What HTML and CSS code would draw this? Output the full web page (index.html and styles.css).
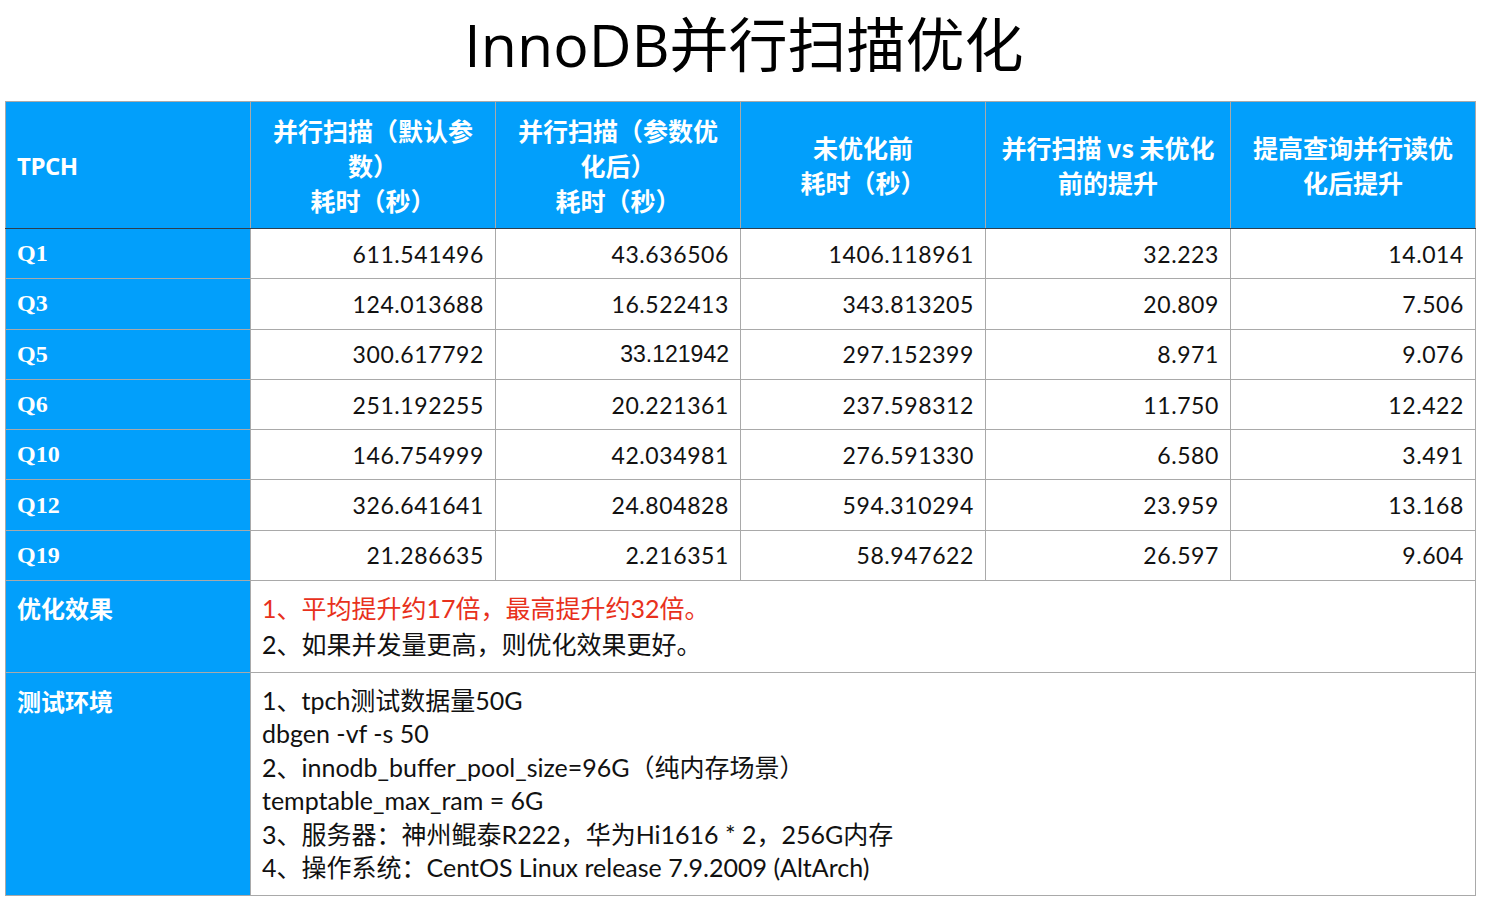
FILE: index.html
```html
<!DOCTYPE html>
<html lang="zh-CN">
<head>
<meta charset="utf-8">
<title>InnoDB并行扫描优化</title>
<link rel="stylesheet" href="styles.css">
</head>
<body>
<h1 class="title">InnoDB并行扫描优化</h1>
<table class="perf">
  <colgroup>
    <col class="c"><col class="c"><col class="c"><col class="c"><col class="c"><col class="c">
  </colgroup>
  <thead>
    <tr class="head">
      <th class="lbl">TPCH</th>
      <th>并行扫描（默认参数）<br>耗时（秒）</th>
      <th>并行扫描（参数优化后）<br>耗时（秒）</th>
      <th>未优化前<br>耗时（秒）</th>
      <th class="wide">并行扫描 vs 未优化前的提升</th>
      <th>提高查询并行读优化后提升</th>
    </tr>
  </thead>
  <tbody>
    <tr><td class="lbl q">Q1</td><td>611.541496</td><td>43.636506</td><td>1406.118961</td><td>32.223</td><td>14.014</td></tr>
    <tr><td class="lbl q">Q3</td><td>124.013688</td><td>16.522413</td><td>343.813205</td><td>20.809</td><td>7.506</td></tr>
    <tr><td class="lbl q">Q5</td><td>300.617792</td><td class="alt">33.121942</td><td>297.152399</td><td>8.971</td><td>9.076</td></tr>
    <tr><td class="lbl q">Q6</td><td>251.192255</td><td>20.221361</td><td>237.598312</td><td>11.750</td><td>12.422</td></tr>
    <tr><td class="lbl q">Q10</td><td>146.754999</td><td>42.034981</td><td>276.591330</td><td>6.580</td><td>3.491</td></tr>
    <tr><td class="lbl q">Q12</td><td>326.641641</td><td>24.804828</td><td>594.310294</td><td>23.959</td><td>13.168</td></tr>
    <tr><td class="lbl q">Q19</td><td>21.286635</td><td>2.216351</td><td>58.947622</td><td>26.597</td><td>9.604</td></tr>
    <tr class="effect">
      <td class="lbl top">优化效果</td>
      <td class="notes" colspan="5">
        <p class="red">1、平均提升约17倍，最高提升约32倍。</p>
        <p>2、如果并发量更高，则优化效果更好。</p>
      </td>
    </tr>
    <tr class="env">
      <td class="lbl top">测试环境</td>
      <td class="notes" colspan="5">
        <p>1、tpch测试数据量50G</p>
        <p>dbgen -vf -s 50</p>
        <p>2、innodb_buffer_pool_size=96G（纯内存场景）</p>
        <p>temptable_max_ram = 6G</p>
        <p>3、服务器：神州鲲泰R222，华为Hi1616 * 2，256G内存</p>
        <p>4、操作系统：CentOS Linux release 7.9.2009 (AltArch)</p>
      </td>
    </tr>
  </tbody>
</table>
</body>
</html>
```
FILE: styles.css
```css
html, body {
  margin: 0;
  padding: 0;
  background: #ffffff;
}
body {
  font-family: "Lato", "Noto Sans CJK SC", sans-serif;
  color: #111;
}
.title {
  margin: 0;
  height: 101px;
  box-sizing: border-box;
  padding-top: 6px;
  text-align: center;
  font-family: "Open Sans", "Noto Sans CJK SC", sans-serif;
  font-weight: 400;
  font-size: 59px;
  line-height: 76px;
  color: #000;
}
.perf {
  margin-left: 5px;
  width: 1471px;
  table-layout: fixed;
  border-collapse: collapse;
  font-size: 23px;
}
.perf col.c { width: 245px; }
.perf th,
.perf td {
  border: 1px solid #a9a9a9;
  padding: 0 11px;
  box-sizing: border-box;
}
.perf .head th {
  height: 127px;
  background: #029ffb;
  color: #fff;
  font-family: "Noto Sans CJK SC", sans-serif;
  font-weight: 700;
  font-size: 25px;
  line-height: 35px;
  text-align: center;
  vertical-align: middle;
  padding: 0 16px;
  border-bottom: 1px solid #2d3f4f;
}
.perf .head th.wide {
  padding: 0 12px;
}
.perf .head th.lbl {
  text-align: left;
  padding-left: 11px;
  font-family: "Open Sans", "Noto Sans CJK SC", sans-serif;
  font-weight: 700;
  font-size: 24px;
  letter-spacing: -0.5px;
}
.perf tbody td {
  height: 50.3px;
  text-align: right;
  vertical-align: middle;
  letter-spacing: 0.6px;
}
.perf tbody td.lbl {
  background: #029ffb;
  color: #fff;
  text-align: left;
  font-weight: 700;
  letter-spacing: 0;
}
.perf tbody td.q {
  font-family: "Liberation Serif", serif;
  font-size: 24px;
  padding-left: 11px;
}
.perf tbody td.top {
  vertical-align: top;
  font-family: "Noto Sans CJK SC", sans-serif;
  font-size: 24px;
  padding-top: 9px;
  line-height: 36px;
}
.perf td.alt {
  font-family: "Liberation Sans", sans-serif;
  letter-spacing: 0;
}
.perf tbody td.notes {
  text-align: left;
  vertical-align: top;
  letter-spacing: 0;
  font-size: 25px;
}
.notes p {
  margin: 0;
}
.perf .effect td {
  height: 92px;
}
.perf .effect td.notes {
  padding-top: 9px;
  line-height: 36px;
}
.red { color: #e8311c; }
.perf .env td {
  height: 223px;
}
.perf .env td.notes {
  padding-top: 11px;
  line-height: 33.4px;
}
.perf .env td.top {
  padding-top: 10px;
}
```
